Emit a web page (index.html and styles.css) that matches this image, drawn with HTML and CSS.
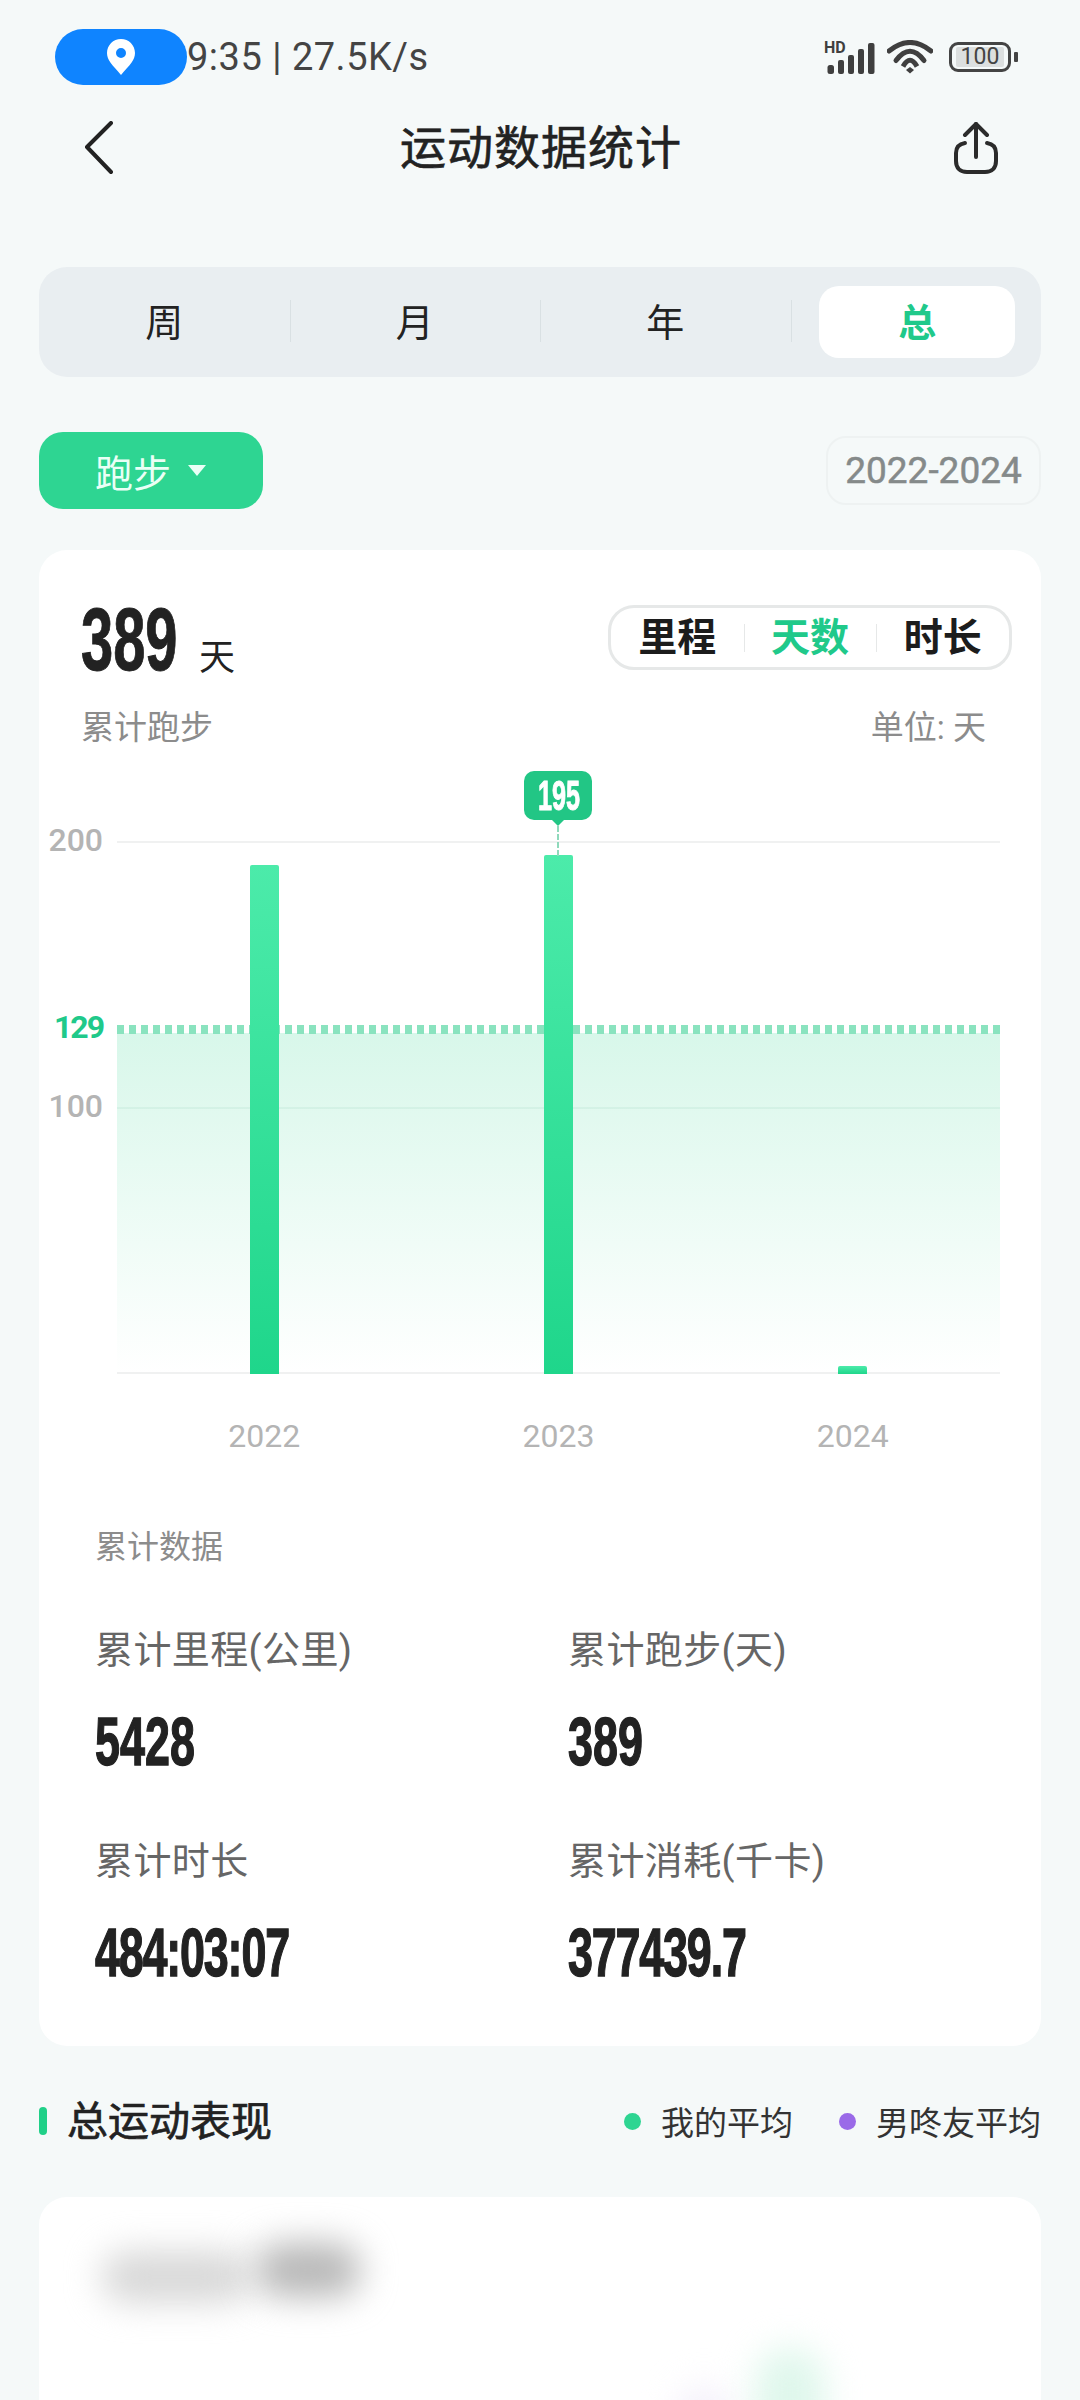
FILE: index.html
```html
<!DOCTYPE html>
<html lang="zh-CN">
<head>
  <meta charset="UTF-8" />
  <meta name="viewport" content="width=device-width, initial-scale=1.0"/>
  <title>运动数据统计</title>
  <link rel="stylesheet" href="styles.css">
</head>
<body>
  <div class="status-bar">
    <div class="loc-pill">
      <svg class="pin" viewBox="0 0 28 36"><path fill="#fff" fill-rule="evenodd" d="M14 0C6.2 0 0 6.2 0 14c0 3.6 1.3 6.6 3.4 9.4C6 27 10.600 31.800 14 36c3.400-4.200 8-9 10.600-12.600C26.700 20.600 28 17.600 28 14 28 6.200 21.800 0 14 0zm0 9a5 5 0 1 1 0 10 5 5 0 0 1 0-10z"/></svg>
    </div>
    <span class="status-text">9:35 | 27.5K/s</span>
    <div class="status-icons">
      <div class="signal-wrap">
        <span class="hd">HD</span>
        <svg class="signal" width="52" height="33" viewBox="0 0 52 33">
          <rect x="3.500" y="24" width="6.500" height="9" rx="2.500"/>
          <rect x="14" y="19" width="6" height="14" rx="2"/>
          <rect x="24" y="14" width="6" height="19" rx="2"/>
          <rect x="34" y="8" width="6" height="25" rx="2"/>
          <rect x="44" y="2" width="6.500" height="31" rx="2"/>
        </svg>
      </div>
      <svg class="wifi" width="46" height="34" viewBox="0 0 46 34">
        <g fill="none" stroke="#3f3f3f" stroke-width="5" stroke-linecap="round">
          <path d="M2 11Q23-6 44 11"/>
          <path d="M9 20.500Q23 2 37 20.500"/>
          <path d="M16 26.500Q23 14 30 26.500" stroke-linecap="butt"/>
        </g>
        <polygon points="23,27 27,30 23,33.500 19,30" fill="#3f3f3f"/>
      </svg>
      <div class="battery">
        <div class="battery-body"><span class="battery-fill">100</span></div>
        <div class="battery-nub"></div>
      </div>
    </div>
  </div>

  <div class="nav">
    <svg class="back" width="30" height="54" viewBox="0 0 30 54"><path d="M27 2 3 26l24 25" fill="none" stroke="#222" stroke-width="4" stroke-linecap="round" stroke-linejoin="round"/></svg>
    <h1 class="nav-title">运动数据统计</h1>
    <svg class="share" width="44" height="52" viewBox="0 0 44 52">
      <g fill="none" stroke="#2b2b2b" stroke-width="4" stroke-linecap="round" stroke-linejoin="round">
        <path d="M22 2v33"/>
        <path d="M11 13 22 2l11 11"/>
        <path d="M11 21C5 22 2 26 2 31v8c0 7 4 11 11 11h18c7 0 11-4 11-11v-8c0-5-3-9-9-10"/>
      </g>
    </svg>
  </div>

  <div class="period-tabs">
    <div class="period">周</div>
    <div class="period">月</div>
    <div class="period">年</div>
    <div class="period period-active"><span>总</span></div>
  </div>

  <div class="filter-row">
    <div class="sport-chip">跑步<i class="caret"></i></div>
    <div class="date-chip">2022-2024</div>
  </div>

  <div class="card main-card">
    <div class="card-head">
      <div class="total"><span class="big-num">389</span><span class="total-unit">天</span></div>
      <div class="metric-tabs">
        <span class="metric">里程</span>
        <span class="metric metric-active">天数</span>
        <span class="metric">时长</span>
      </div>
    </div>
    <div class="sub-row"><span>累计跑步</span><span>单位: 天</span></div>

    <div class="plot">
      <div class="avg-area"></div>
      <div class="grid-line grid-200"><span class="axis-label">200</span></div>
      <div class="grid-line grid-100"><span class="axis-label">100</span></div>
      <div class="grid-line grid-0"></div>
      <div class="avg-dots"><span class="axis-label axis-avg">129</span></div>
      <div class="bars">
        <div class="bar-cell"><div class="bar" style="height:509px"></div></div>
        <div class="bar-cell">
          <div class="bar" style="height:519px">
            <div class="bar-tip"><span class="cond tip-num">195</span></div>
          </div>
        </div>
        <div class="bar-cell"><div class="bar" style="height:8px"></div></div>
      </div>
    </div>
    <div class="years"><span>2022</span><span>2023</span><span>2024</span></div>

    <div class="data-title">累计数据</div>
    <div class="data-grid">
      <div class="data-item">
        <div class="data-label">累计里程(公里)</div>
        <div class="data-value"><span class="cond val-num">5428</span></div>
      </div>
      <div class="data-item">
        <div class="data-label">累计跑步(天)</div>
        <div class="data-value"><span class="cond val-num">389</span></div>
      </div>
      <div class="data-item">
        <div class="data-label">累计时长</div>
        <div class="data-value"><span class="cond val-num val-tight">484:03:07</span></div>
      </div>
      <div class="data-item">
        <div class="data-label">累计消耗(千卡)</div>
        <div class="data-value"><span class="cond val-num val-tight">377439.7</span></div>
      </div>
    </div>
  </div>

  <div class="section-head">
    <div class="section-title">总运动表现</div>
    <div class="legend">
      <span class="legend-item"><i class="dot dot-green"></i>我的平均</span>
      <span class="legend-item"><i class="dot dot-purple"></i>男咚友平均</span>
    </div>
  </div>

  <div class="card blur-card">
    <div class="blur-row">
      <div class="blob blob-light"></div>
      <div class="blob blob-dark"></div>
    </div>
    <div class="blob blob-green"></div>
    <div class="blob blob-purple"></div>
  </div>
</body>
</html>
```

FILE: styles.css
```css
* {
  box-sizing: border-box;
}
html, body {
  margin: 0;
  padding: 0;
}
body {
  width: 1080px;
  height: 2400px;
  overflow: hidden;
  background: #f5f9f9;
  color: #222;
  font-family: "Roboto", "Noto Sans CJK SC", sans-serif;
}

/* status bar */
.status-bar {
  display: flex;
  align-items: center;
  height: 56px;
  margin-top: 29px;
  padding: 0 62px 0 55px;
}
.loc-pill {
  display: flex;
  align-items: center;
  justify-content: center;
  width: 132px;
  height: 56px;
  border-radius: 28px;
  background: #0f84ff;
}
.pin {
  width: 28px;
  height: 36px;
}
.status-text {
  font-size: 38px;
  line-height: 56px;
  letter-spacing: 0.5px;
  color: #444;
}
.status-icons {
  display: flex;
  align-items: center;
  margin-left: auto;
}
.signal-wrap {
  position: relative;
  width: 52px;
  height: 33px;
}
.signal {
  display: block;
}
.signal rect {
  fill: #3f3f3f;
}
.hd {
  position: absolute;
  left: 0;
  top: -1px;
  font-size: 16px;
  font-weight: 700;
  line-height: 16px;
  color: #3f3f3f;
}
.wifi {
  margin-left: 11px;
}
.battery {
  display: flex;
  align-items: center;
  margin-left: 16px;
}
.battery-body {
  display: flex;
  align-items: center;
  justify-content: center;
  width: 62px;
  height: 30px;
  border: 3px solid #444;
  border-radius: 9px;
}
.battery-fill {
  width: 48px;
  height: 20px;
  border-radius: 2px;
  background: #dcdfdf;
  font-size: 23px;
  line-height: 20px;
  text-align: center;
  color: #444;
}
.battery-nub {
  width: 4px;
  height: 10px;
  margin-left: 3px;
  border-radius: 1px;
  background: #444;
}

/* nav */
.nav {
  display: grid;
  grid-template-columns: 1fr auto 1fr;
  align-items: center;
  height: 70px;
  margin-top: 28px;
  padding: 0 82px 0 84px;
}
.share {
  justify-self: end;
}
.nav-title {
  margin: 0;
  font-size: 46px;
  font-weight: 400;
  line-height: 70px;
  letter-spacing: 1px;
  color: #222;
  -webkit-text-stroke: 0.6px #222;
}

/* period tabs */
.period-tabs {
  display: flex;
  height: 110px;
  margin: 84px 39px 0 39px;
  border-radius: 28px;
  background: #e9eef1;
}
.period {
  position: relative;
  display: flex;
  flex: 1;
  align-items: center;
  justify-content: center;
  padding-bottom: 5px;
  font-size: 38px;
  color: #222;
}
.period + .period::before {
  content: "";
  position: absolute;
  left: 0;
  top: 33px;
  height: 42px;
  width: 1px;
  background: #d9e0e3;
}
.period-active {
  padding-bottom: 0;
}
.period-active span {
  display: flex;
  align-items: center;
  justify-content: center;
  width: 196px;
  height: 72px;
  margin-left: 3px;
  padding-bottom: 5px;
  border-radius: 20px;
  background: #fff;
  color: #20c98a;
  font-weight: 700;
}

/* filter row */
.filter-row {
  display: flex;
  align-items: center;
  justify-content: space-between;
  height: 77px;
  margin: 55px 39px 0 39px;
}
.sport-chip {
  display: flex;
  align-items: center;
  width: 224px;
  height: 77px;
  padding-left: 56px;
  border-radius: 24px;
  background: #2ed592;
  font-size: 38px;
  color: #eafff6;
}
.caret {
  width: 0;
  height: 0;
  margin-left: 17px;
  border-left: 9px solid transparent;
  border-right: 9px solid transparent;
  border-top: 11px solid #eafff6;
}
.date-chip {
  display: flex;
  align-items: center;
  justify-content: center;
  width: 215px;
  height: 69px;
  border: 2px solid #eef2f2;
  border-radius: 20px;
  font-size: 37px;
  color: #858a8a;
  -webkit-text-stroke: 0.5px #858a8a;
}

/* cards */
.card {
  margin: 0 39px;
  border-radius: 28px;
  background: #fff;
}
.main-card {
  height: 1496px;
  margin-top: 41px;
  padding-top: 55px;
}
.card-head {
  display: flex;
  justify-content: space-between;
  height: 103px;
  padding: 0 29px 0 42px;
}
.total {
  display: flex;
  align-items: flex-start;
}
.big-num,
.cond {
  display: inline-block;
  font-family: "Liberation Sans", sans-serif;
  font-weight: 700;
  transform-origin: left center;
  -webkit-text-stroke: 1px #222;
}
.big-num {
  width: 118px;
  height: 68px;
  font-size: 89px;
  line-height: 68px;
  transform: scaleX(0.65);
  color: #222;
}
.total-unit {
  margin-top: 31px;
  font-size: 36px;
  line-height: 44px;
}
.metric-tabs {
  display: flex;
  align-items: center;
  justify-content: center;
  width: 404px;
  height: 65px;
  border: 3px solid #e6e8e8;
  border-radius: 26px;
}
.metric {
  position: relative;
  width: 133px;
  font-size: 39px;
  font-weight: 700;
  line-height: 50px;
  text-align: center;
  color: #1c1c1c;
}
.metric + .metric::before {
  content: "";
  position: absolute;
  left: 0;
  top: 11px;
  height: 28px;
  width: 1px;
  background: #e6e8e8;
}
.metric-active {
  color: #20c98a;
}
.sub-row {
  display: flex;
  justify-content: space-between;
  padding: 0 55px 0 42px;
  font-size: 33px;
  line-height: 40px;
  color: #8c8c8c;
}

/* chart */
.plot {
  position: relative;
  height: 533px;
  margin: 93px 41px 0 78px;
}
.grid-line {
  position: absolute;
  left: 0;
  right: 0;
  height: 2px;
  background: #f0f1f1;
}
.grid-200 {
  top: 0;
}
.grid-100 {
  top: 266px;
  background: rgba(120, 200, 165, 0.12);
}
.grid-0 {
  bottom: 0;
}
.axis-label {
  position: absolute;
  right: calc(100% + 14px);
  top: 50%;
  margin-top: -2px;
  transform: translateY(-50%);
  font-size: 32px;
  font-weight: 500;
  line-height: 36px;
  color: #b4b4b4;
}
.axis-avg {
  margin-top: -3px;
  color: #20c98a;
  font-weight: 700;
  letter-spacing: -2px;
}
.avg-area {
  position: absolute;
  left: 0;
  right: 0;
  top: 192px;
  bottom: 0;
  background: linear-gradient(#d8f7ea, #ffffff);
}
.avg-dots {
  position: absolute;
  left: 0;
  right: 0;
  top: 184px;
  height: 9px;
  background: repeating-linear-gradient(90deg, #8ae3bf 0 7px, transparent 7px 12px);
}
.bars {
  position: absolute;
  inset: 0;
  display: flex;
  z-index: 2;
}
.bar-cell {
  display: flex;
  flex: 1;
  align-items: flex-end;
  justify-content: center;
}
.bar {
  position: relative;
  width: 29px;
  border-radius: 2px 2px 0 0;
  background: linear-gradient(#4cebaa, #1fd68b);
}
.bar-tip {
  position: absolute;
  left: 50%;
  bottom: calc(100% + 35px);
  display: flex;
  align-items: center;
  justify-content: flex-start;
  width: 68px;
  height: 49px;
  margin-left: -34px;
  padding-left: 14px;
  border-radius: 10px;
  background: #22c685;
}
.bar-tip::after {
  content: "";
  position: absolute;
  left: 28px;
  top: 100%;
  border-left: 6px solid transparent;
  border-right: 6px solid transparent;
  border-top: 6px solid #22c685;
}
.bar-tip::before {
  content: "";
  position: absolute;
  left: 33px;
  top: 55px;
  height: 30px;
  border-left: 2px dashed #8fd9bb;
}
.tip-num {
  font-size: 42px;
  line-height: 49px;
  color: #fff;
  transform: scaleX(0.6);
  -webkit-text-stroke: 1px #fff;
}
.years {
  display: flex;
  margin: 42px 41px 0 78px;
  font-size: 32px;
  line-height: 40px;
  color: #b4b4b4;
}
.years span {
  flex: 1;
  text-align: center;
}

/* totals */
.data-title {
  margin: 71px 0 0 56px;
  font-size: 32px;
  line-height: 40px;
  color: #8c8c8c;
}
.data-grid {
  display: grid;
  grid-template-columns: 473px 1fr;
  row-gap: 68px;
  margin: 61px 0 0 56px;
}
.data-label {
  font-size: 38px;
  line-height: 44px;
  letter-spacing: 0.4px;
  color: #666;
}
.data-value {
  height: 60px;
  margin-top: 39px;
}
.val-num {
  font-size: 68px;
  line-height: 60px;
  transform: scaleX(0.66);
  color: #222;
  white-space: nowrap;
  -webkit-text-stroke: 1.4px #222;
}
.val-tight {
  letter-spacing: -1.8px;
}

/* second section */
.section-head {
  display: flex;
  align-items: center;
  justify-content: space-between;
  height: 60px;
  margin: 46px 39px 0 39px;
}
.section-title {
  position: relative;
  padding-left: 28px;
  font-size: 41px;
  line-height: 60px;
  color: #222;
  -webkit-text-stroke: 0.7px #222;
}
.section-title::before {
  content: "";
  position: absolute;
  left: 0;
  top: 15px;
  width: 8px;
  height: 28px;
  border-radius: 4px;
  background: #20d088;
}
.legend {
  display: flex;
  gap: 46px;
  font-size: 33px;
  color: #333;
}
.legend-item {
  display: flex;
  align-items: center;
  padding-bottom: 2px;
}
.dot {
  width: 17px;
  height: 17px;
  margin-right: 20px;
  border-radius: 50%;
}
.dot-green {
  background: #2ed592;
}
.dot-purple {
  background: #9a6ae8;
}
.blur-card {
  position: relative;
  height: 260px;
  margin-top: 45px;
  overflow: hidden;
}
.blur-row {
  display: flex;
  gap: 4px;
  padding: 46px 0 0 62px;
}
.blob {
  border-radius: 40px;
  filter: blur(17px);
}
.blob-light {
  width: 150px;
  height: 52px;
  margin-top: 8px;
  background: #d8d8d8;
}
.blob-dark {
  width: 106px;
  height: 54px;
  background: #b8b8b8;
}
.blob-green {
  position: absolute;
  left: 716px;
  top: 150px;
  width: 70px;
  height: 140px;
  background: #dff7ec;
}
.blob-purple {
  position: absolute;
  left: 640px;
  top: 190px;
  width: 50px;
  height: 100px;
  background: #f3effa;
}
```
